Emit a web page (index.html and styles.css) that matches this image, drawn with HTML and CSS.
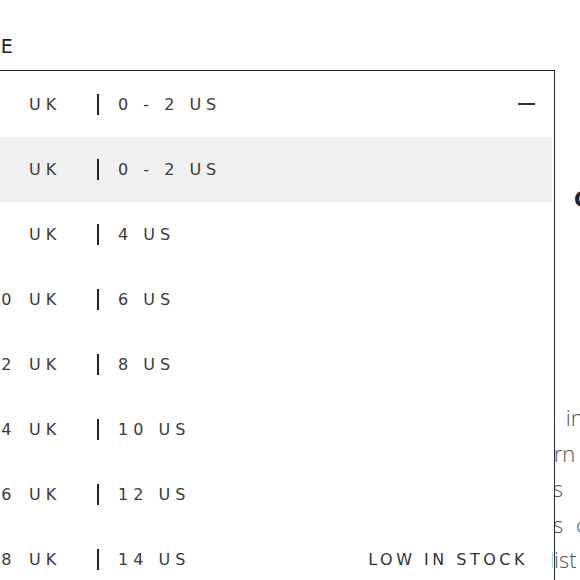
FILE: index.html
```html
<!DOCTYPE html>
<html lang="en">
<head>
<meta charset="utf-8">
<title>Size selector</title>
<link rel="stylesheet" href="styles.css">
</head>
<body>
<div class="page">
  <section class="size-col">
    <h2 class="size-title">SIZE</h2>
    <div class="select">
      <div class="row row-head">
        <span class="num">4</span><span class="uk">UK</span><span class="bar"></span><span class="us">0 - 2 US</span>
        <span class="minus"></span>
      </div>
      <ul class="options">
        <li class="row row-active"><span class="num">4</span><span class="uk">UK</span><span class="bar"></span><span class="us">0 - 2 US</span></li>
        <li class="row"><span class="num">8</span><span class="uk">UK</span><span class="bar"></span><span class="us">4 US</span></li>
        <li class="row"><span class="num">10</span><span class="uk">UK</span><span class="bar"></span><span class="us">6 US</span></li>
        <li class="row"><span class="num">12</span><span class="uk">UK</span><span class="bar"></span><span class="us">8 US</span></li>
        <li class="row"><span class="num">14</span><span class="uk">UK</span><span class="bar"></span><span class="us">10 US</span></li>
        <li class="row"><span class="num">16</span><span class="uk">UK</span><span class="bar"></span><span class="us">12 US</span></li>
        <li class="row"><span class="num">18</span><span class="uk">UK</span><span class="bar"></span><span class="us">14 US</span><span class="stock">LOW IN STOCK</span></li>
        <li class="row"><span class="num">20</span><span class="uk">UK</span><span class="bar"></span><span class="us">16 US</span></li>
      </ul>
    </div>
  </section>
  <section class="info-col">
    <h3 class="info-title">COLOUR</h3>
    <p class="info-text">e in the<br>&nbsp;rn with<br>as<br>es cut<br>dist</p>
  </section>
</div>
</body>
</html>
```
FILE: styles.css
```css
html, body {
  margin: 0;
  padding: 0;
  background: #fff;
}
body {
  width: 580px;
  height: 580px;
  overflow: hidden;
  font-family: "DejaVu Sans", "Liberation Sans", sans-serif;
  color: #2a2a2a;
}
.page {
  display: flex;
  align-items: flex-start;
  margin-left: -60px;
}
.size-col {
  width: 615px;
  flex: none;
  margin-right: -13px;
  position: relative;
  z-index: 1;
}
.size-title {
  margin: 36px 0 14px 0;
  padding-left: 15px;
  font-size: 19px;
  line-height: 20px;
  font-weight: normal;
  letter-spacing: 5px;
  color: #222;
}
.select {
  border: 1px solid #2a2a2a;
  border-bottom: none;
  background: #fff;
  background-clip: content-box;
  padding-right: 2px;
}
.options {
  list-style: none;
  margin: 0;
  padding: 0;
}
.row {
  display: flex;
  align-items: center;
  height: 65px;
  padding-left: 45px;
  font-size: 16px;
  font-weight: normal;
  letter-spacing: 5px;
  color: #3a3a3a;
}
.row-head {
  height: 66px;
}
.row-active {
  background: #f0f0f0;
}
.num {
  width: 43px;
  flex: none;
}
.uk {
  width: 68px;
  flex: none;
}
.bar {
  width: 2px;
  height: 21px;
  background: #222;
  margin-right: 19px;
  flex: none;
}
.us {
  flex: 1;
}
.minus {
  width: 17px;
  height: 2px;
  background: #333;
  margin-right: 17px;
}
.stock {
  font-size: 16px;
  letter-spacing: 3.5px;
  margin-right: 24px;
  color: #333;
}
.info-col {
  flex: 1;
  padding-top: 188px;
}
.info-title {
  margin: 0 0 188px 32px;
  font-size: 21px;
  line-height: 24px;
  font-weight: bold;
  letter-spacing: 2px;
  color: #222;
}
.info-text {
  margin: 0 0 0 -1px;
  font-family: "Open Sans", "Liberation Sans", sans-serif;
  font-weight: 300;
  font-size: 22px;
  line-height: 35.5px;
  word-spacing: 7px;
  color: #555;
  white-space: nowrap;
}
```
